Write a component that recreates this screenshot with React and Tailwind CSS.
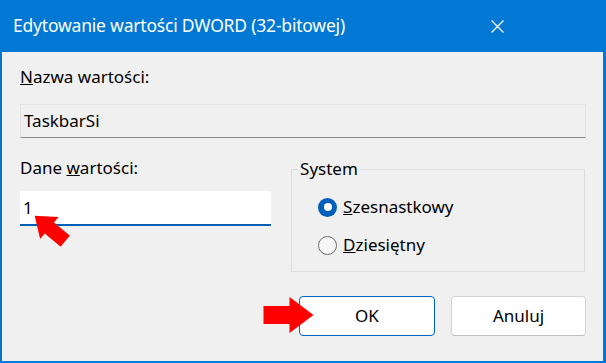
import React from 'react';

const font = { fontFamily: '"Noto Sans", "Open Sans", sans-serif' };

function RedArrow({ className, rotate = 0 }) {
    return (
        <svg viewBox="0 0 50 36" className={className} style={{ transform: `rotate(${rotate}deg)` }}>
            <path d="M0 9 H26 V0 L50 18 L26 36 V27 H0 Z" fill="#ff0000" />
        </svg>
    );
}

export default function App() {
    return (
        <div className="relative w-[606px] h-[363px] overflow-hidden bg-[#f0f0f0] border-l-2 border-r-[3px] border-b-2 border-[#0078d4] text-black" style={font}>
            <div className="flex h-[52px] items-center justify-between bg-[#0078d4] pl-[11px] pr-[99px] text-white">
                <span className="text-[17.5px] leading-none tracking-[-0.2px]">Edytowanie wartości DWORD (32-bitowej)</span>
                <svg viewBox="0 0 12 12" className="h-[13px] w-[13px]">
                    <path d="M0.5 0.5 L11.5 11.5 M11.5 0.5 L0.5 11.5" stroke="#fff" strokeWidth="1.1" />
                </svg>
            </div>

            <div className="flex flex-col px-[18px] pt-[13px]">
                <div className="text-[17px] leading-[23px]"><u>N</u>azwa wartości:</div>
                <div className="mt-[16px] flex h-[34px] w-[566px] items-center border border-[#e3e3e3] border-b-[#8a8a8a] bg-[#f0f0f0] px-[3px] text-[17px]">
                    TaskbarSi
                </div>

                <div className="mt-[18px] flex gap-[20px]">
                    <div className="flex w-[252px] flex-col">
                        <div className="text-[17px] leading-[23px]">Dane <u>w</u>artości:</div>
                        <div className="mt-[12px] flex h-[35px] items-center border-b-2 border-[#005fb8] bg-white px-[3px] text-[17px]">
                            1
                        </div>
                    </div>

                    <div className="relative mt-[13px] h-[103px] w-[295px] border border-[#dcdcdc]">
                        <span className="absolute -top-[13px] left-[6px] bg-[#f0f0f0] px-[2px] text-[17px] leading-[23px]">System</span>
                        <div className="flex flex-col gap-[16px] pl-[26px] pt-[26px]">
                            <div className="flex items-center gap-[6px] text-[17px] leading-[22px]">
                                <span className="flex h-[19px] w-[19px] items-center justify-center rounded-full bg-[#005fb8]">
                                    <span className="h-[8px] w-[8px] rounded-full bg-white" />
                                </span>
                                <span><u>S</u>zesnastkowy</span>
                            </div>
                            <div className="flex items-center gap-[6px] text-[17px] leading-[22px]">
                                <span className="h-[19px] w-[19px] rounded-full border border-[#6b6b6b] bg-[#f7f7f7]" />
                                <span><u>D</u>ziesiętny</span>
                            </div>
                        </div>
                    </div>
                </div>

                <div className="mt-[24px] -mr-[1px] flex justify-end gap-[16px]">
                    <button type="button" className="h-[40px] w-[136px] rounded-[4px] border border-[#0067c0] bg-white text-[17px]">OK</button>
                    <button type="button" className="h-[40px] w-[135px] rounded-[4px] border border-[#d4d4d4] border-b-[#bdbdbd] bg-white text-[17px]">Anuluj</button>
                </div>
            </div>

            <RedArrow className="absolute left-[28px] top-[214px] h-[29px] w-[40px]" rotate={-140} />
            <RedArrow className="absolute left-[261px] top-[297px] h-[36px] w-[51px]" />
        </div>
    );
}
